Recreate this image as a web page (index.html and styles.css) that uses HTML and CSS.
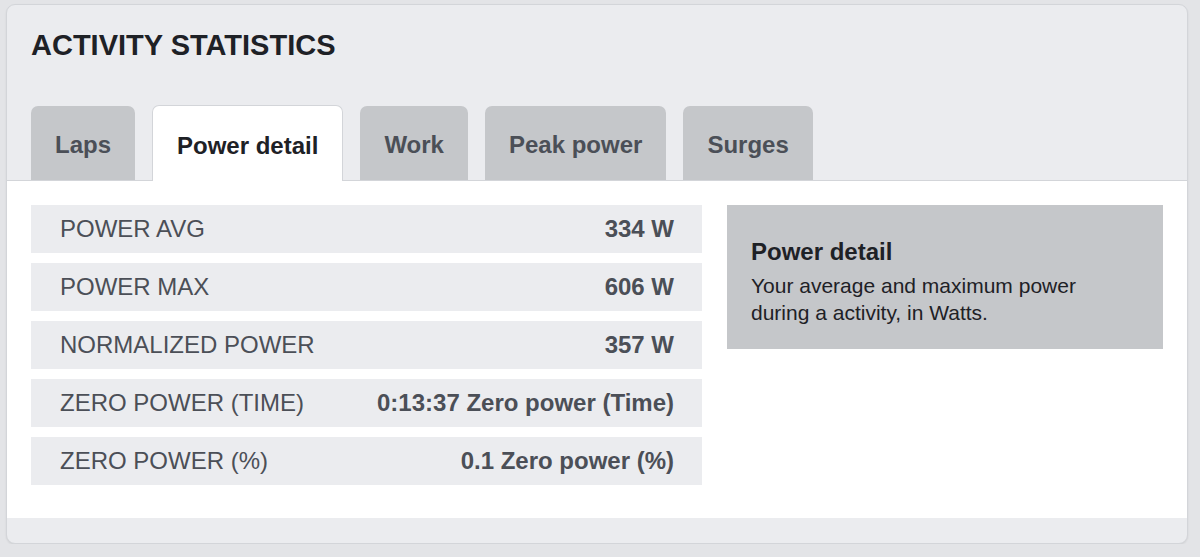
FILE: index.html
```html
<!DOCTYPE html>
<html lang="en">
<head>
  <meta charset="UTF-8" />
  <meta name="viewport" content="width=device-width, initial-scale=1.0" />
  <title>Activity statistics</title>
  <link rel="stylesheet" href="styles.css">
</head>
<body>

  <div class="card">
    <div class="card-head">
      <h2>ACTIVITY STATISTICS</h2>
      <div class="tabs">
        <div class="tab">Laps</div>
        <div class="tab active">Power detail</div>
        <div class="tab">Work</div>
        <div class="tab">Peak power</div>
        <div class="tab">Surges</div>
      </div>
    </div>

    <div class="card-body">
      <div class="stats">
        <div class="stat-row"><span>POWER AVG</span><b>334 W</b></div>
        <div class="stat-row"><span>POWER MAX</span><b>606 W</b></div>
        <div class="stat-row"><span>NORMALIZED POWER</span><b>357 W</b></div>
        <div class="stat-row"><span>ZERO POWER (TIME)</span><b>0:13:37 Zero power (Time)</b></div>
        <div class="stat-row"><span>ZERO POWER (%)</span><b>0.1 Zero power (%)</b></div>
      </div>

      <div class="info">
        <h3>Power detail</h3>
        <p>Your average and maximum power during a activity, in Watts.</p>
      </div>
    </div>

    <div class="card-foot"></div>
  </div>

</body>
</html>
```

FILE: styles.css
```css
:root {
  --page: #e3e4e7;
  --panel: #ebecef;
  --tab: #c5c7ca;
  --border: #d3d5d9;
  --text: #1e2126;
  --muted: #4b4f57;
}
body {
  font-family: "Liberation Sans", Arial, sans-serif;
  margin: 0;
  padding: 4px 12px 0 6px;
  background-color: var(--page);
}
.card {
  background: var(--panel);
  border: 1px solid var(--border);
  border-radius: 9px;
  overflow: hidden;
  box-shadow: 0 1px 2px rgba(0, 0, 0, 0.08);
}
.card-head {
  padding: 23px 24px 0 24px;
}
h2 {
  margin: 0;
  font-size: 29px;
  line-height: 34px;
  font-weight: bold;
  color: var(--text);
}
.tabs {
  display: flex;
  align-items: flex-end;
  margin-top: 43px;
}
.tab {
  height: 74px;
  line-height: 78px;
  padding: 0 24px;
  margin-right: 17px;
  background: var(--tab);
  color: var(--muted);
  font-size: 24px;
  font-weight: bold;
  border-radius: 7px 7px 0 0;
}
.tab.active {
  background: #fff;
  color: var(--text);
  height: 75px;
  line-height: 80px;
  padding: 0 24px;
  border: 1px solid var(--border);
  border-bottom: none;
  margin-bottom: -1px;
  position: relative;
}
.card-body {
  background: #fff;
  border-top: 1px solid var(--border);
  display: grid;
  grid-template-columns: 671px 1fr;
  gap: 25px;
  align-items: start;
  padding: 24px 24px 33px 24px;
}
.stats {
  display: flex;
  flex-direction: column;
  gap: 10px;
}
.stat-row {
  display: flex;
  justify-content: space-between;
  align-items: center;
  height: 48px;
  padding: 0 28px 0 29px;
  background: var(--panel);
  color: var(--muted);
  font-size: 24px;
}
.stat-row b {
  font-weight: bold;
}
.info {
  background: var(--tab);
  padding: 32px 24px 23px 24px;
  color: var(--text);
}
.info h3 {
  margin: 0;
  font-size: 24px;
  line-height: 29px;
  font-weight: bold;
}
.info p {
  margin: 6px 0 0 0;
  font-size: 21px;
  line-height: 27px;
  max-width: 340px;
}
.card-foot {
  height: 25px;
}
```
